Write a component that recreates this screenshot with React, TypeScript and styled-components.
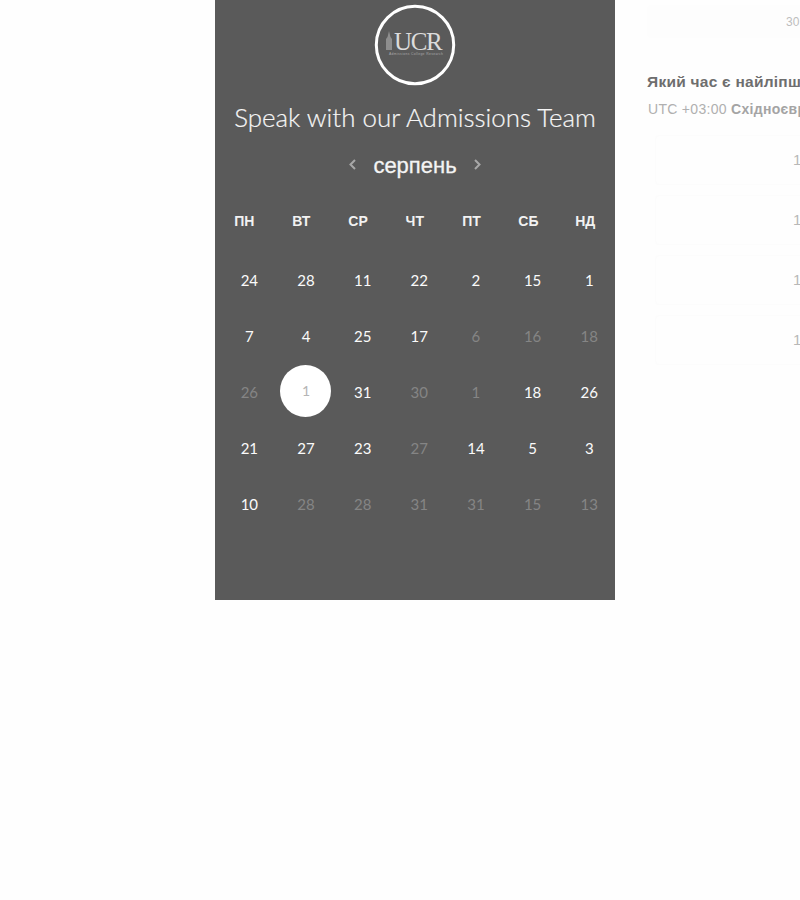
import React from "react";
import styled, { createGlobalStyle } from "styled-components";

const Global = createGlobalStyle`
  html, body { margin: 0; padding: 0; height: 100%; overflow: hidden; background: #fefefe; }
  #root { height: 900px; overflow: hidden; }
`;

const Page = styled.div`
  display: flex;
  width: 800px;
  height: 900px;
  overflow: hidden;
  padding-left: 215px;
  box-sizing: border-box;
`;

const Panel = styled.section`
  flex: 0 0 400px;
  min-width: 0;
  height: 600px;
  background: #5a5a5a;
  display: flex;
  flex-direction: column;
  align-items: center;
  padding-top: 4px;
  box-sizing: border-box;
  color: #fff;
`;

const LogoWrap = styled.div`
  width: 82px;
  height: 82px;
  flex: none;
`;

const Title = styled.h1`
  margin: 16px 0 0;
  height: 30px;
  font: 300 25.9px/30px Lato, "Open Sans", sans-serif;
  color: #f6f6f6;
  -webkit-text-stroke: 0.2px #f6f6f6;
  white-space: nowrap;
`;

const MonthBar = styled.div`
  margin-top: 19px;
  display: flex;
  align-items: center;
  justify-content: center;
  gap: 15px;
  height: 30px;
`;

const MonthName = styled.div`
  font: 400 22px/30px "Liberation Sans", Arial, sans-serif;
  color: #f4f4f4;
  -webkit-text-stroke: 0.3px #f4f4f4;
  width: 86px;
  text-align: center;
  white-space: nowrap;
`;

const Arrow = styled.svg`
  width: 9px;
  height: 13px;
  flex: none;
  margin-top: -3px;
`;

const WeekRow = styled.div`
  align-self: flex-start;
  margin: 26px 0 0 1px;
  display: grid;
  grid-template-columns: repeat(7, 56.8px);
  height: 28px;
`;

const WeekDay = styled.div`
  font: 700 14px/28px "Liberation Sans", Arial, sans-serif;
  color: #f2f2f2;
  text-align: center;
`;

const DayGrid = styled.div`
  align-self: flex-start;
  margin: 17px 0 0 6px;
  display: grid;
  grid-template-columns: repeat(7, 56.67px);
  grid-auto-rows: 56.1px;
`;

const Day = styled.div<{ $muted?: boolean; $selected?: boolean }>`
  position: relative;
  display: flex;
  align-items: center;
  justify-content: center;
  font: 400 15px/20px Lato, "Open Sans", sans-serif;
  color: ${(p) => (p.$selected ? "#b5b5b5" : p.$muted ? "#858585" : "#fbfbfb")};
  ${(p) =>
    p.$selected &&
    `
    &::before {
      content: "";
      position: absolute;
      left: 2.3px;
      top: 0.5px;
      width: 51px;
      height: 52px;
      border-radius: 50%;
      background: #fff;
    }
  `}
`;

const DayLabel = styled.span<{ $selected?: boolean }>`
  position: relative;
  ${(p) => p.$selected && "font-size: 14px; top: -1px;"}
`;

const Side = styled.aside`
  flex: 0 0 400px;
  margin-left: 32px;
  position: relative;
`;

const SmallCard = styled.div`
  margin-top: 5px;
  height: 33px;
  padding-left: 139px;
  background: #fdfdfd;
  border-radius: 4px;
  font: 400 12px/35px "Liberation Sans", Arial, sans-serif;
  color: #bdbdbd;
`;

const Question = styled.h2`
  margin: 34px 0 0;
  font: 700 15.5px/20px "Liberation Sans", Arial, sans-serif;
  letter-spacing: 0.25px;
  color: #6e6e6e;
  white-space: nowrap;
`;

const Zone = styled.div`
  margin: 7px 0 0 1px;
  font: 400 14px/20px "Liberation Sans", Arial, sans-serif;
  letter-spacing: 0.3px;
  color: #b0b0b0;
  white-space: nowrap;
`;

const ZoneName = styled.b`
  font-weight: 700;
  color: #a4a4a4;
`;

const Slots = styled.div`
  margin: 16px 0 0 8px;
  display: flex;
  flex-direction: column;
  gap: 10px;
`;

const Slot = styled.div`
  height: 50px;
  box-sizing: border-box;
  border: 1px solid #fcfcfc;
  border-radius: 4px;
  padding-left: 137px;
  font: 400 15px/48px "Liberation Sans", Arial, sans-serif;
  color: #b8b8b8;
`;

const weekdays = ["ПН", "ВТ", "СР", "ЧТ", "ПТ", "СБ", "НД"];

const days: [number, boolean?, boolean?][] = [
  [24], [28], [11], [22], [2], [15], [1],
  [7], [4], [25], [17], [6, true], [16, true], [18, true],
  [26, true], [1, false, true], [31], [30, true], [1, true], [18], [26],
  [21], [27], [23], [27, true], [14], [5], [3],
  [10], [28, true], [28, true], [31, true], [31, true], [15, true], [13, true],
];

const slots = ["10:00", "10:30", "11:00", "11:30"];

function Logo() {
  return (
    <svg width="82" height="82" viewBox="0 0 82 82">
      <circle cx="41" cy="41" r="38.7" fill="none" stroke="#fff" strokeWidth="3" />
      <path d="M12 46 V35 L13.5 33 L15 27 L16.5 33 L18 35 V46 Z" fill="#8e8e8e" />
      <text
        x="20"
        y="45.5"
        fontFamily="'Liberation Serif', serif"
        fontSize="25"
        letterSpacing="-1.4"
        fill="#dcdcdc"
      >
        UCR
      </text>
      <text
        x="15"
        y="50.5"
        fontFamily="'Liberation Sans', sans-serif"
        fontSize="3.4"
        fill="#a8a8a8"
        textLength="54"
      >
        Admissions College Research
      </text>
    </svg>
  );
}

export default function App() {
  return (
    <>
      <Global />
      <Page>
        <Panel>
          <LogoWrap>
            <Logo />
          </LogoWrap>
          <Title>Speak with our Admissions Team</Title>
          <MonthBar>
            <Arrow viewBox="0 0 9 13">
              <path d="M7 2 L2.5 6.5 L7 11" fill="none" stroke="#a8a8a8" strokeWidth="2" />
            </Arrow>
            <MonthName>серпень</MonthName>
            <Arrow viewBox="0 0 9 13">
              <path d="M2 2 L6.5 6.5 L2 11" fill="none" stroke="#a8a8a8" strokeWidth="2" />
            </Arrow>
          </MonthBar>
          <WeekRow>
            {weekdays.map((d) => (
              <WeekDay key={d}>{d}</WeekDay>
            ))}
          </WeekRow>
          <DayGrid>
            {days.map(([n, muted, selected], i) => (
              <Day key={i} $muted={muted} $selected={selected}>
                <DayLabel $selected={selected}>{n}</DayLabel>
              </Day>
            ))}
          </DayGrid>
        </Panel>
        <Side>
          <SmallCard>30 хв</SmallCard>
          <Question>Який час є найліпшим для вас?</Question>
          <Zone>
            UTC +03:00 <ZoneName>Східноєвропейський час</ZoneName>
          </Zone>
          <Slots>
            {slots.map((s) => (
              <Slot key={s}>{s}</Slot>
            ))}
          </Slots>
        </Side>
      </Page>
    </>
  );
}
